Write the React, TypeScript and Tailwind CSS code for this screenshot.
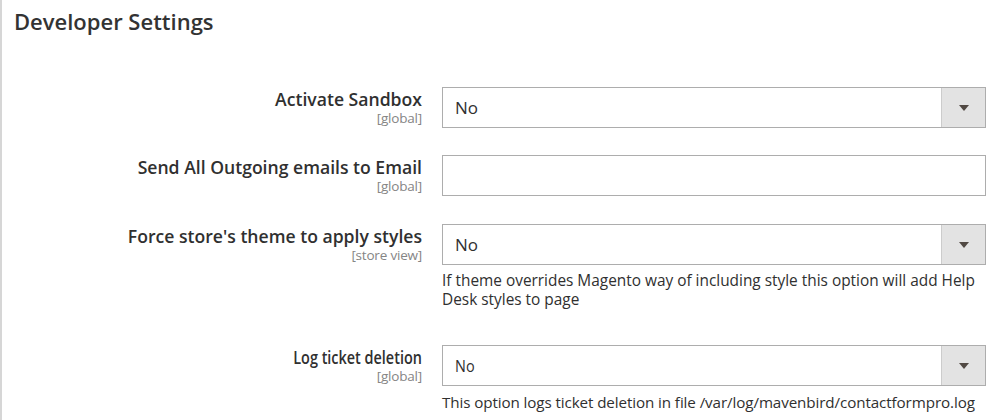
import React from "react";

const font = { fontFamily: '"Open Sans", "Liberation Sans", sans-serif' };

function Arrow() {
  return (
    <div className="w-[44px] h-full bg-[#e3e3e3] border-l border-[#cccccc] flex items-center justify-center">
      <svg width="10" height="6" viewBox="0 0 10 6">
        <polygon points="0,0 10,0 5,6" fill="#514943" />
      </svg>
    </div>
  );
}

function Select({ value, condensed }: { value: string; condensed?: boolean }) {
  return (
    <div className="h-[41px] w-[544px] border border-[#adadad] bg-white flex items-stretch">
      <div className="flex-1 flex items-center pl-[12px] text-[17px] text-[#303030]">
        <span className={condensed ? "inline-block scale-x-[0.85] origin-left" : ""}>{value}</span>
      </div>
      <Arrow />
    </div>
  );
}

function Row({
  label,
  scope,
  children,
  className,
  condensed,
}: {
  label: string;
  scope: string;
  children: React.ReactNode;
  className?: string;
  condensed?: boolean;
}) {
  return (
    <div className={"flex " + (className || "")}>
      <div className="w-[421px] shrink-0 pr-[1px] flex flex-col items-end pt-[1px]">
        <div
          className={
            "text-[17.6px] leading-[22px] font-semibold text-[#303030] whitespace-nowrap" +
            (condensed ? " scale-x-[0.82] origin-right" : "")
          }
        >
          {label}
        </div>
        <div className="text-[13.5px] leading-[15px] text-[#858585] mt-[1px] tracking-[-0.2px]">{scope}</div>
      </div>
      <div className="ml-[19px] shrink-0 flex flex-col">{children}</div>
    </div>
  );
}

export default function App() {
  return (
    <div style={font} className="w-[995px] h-[420px] bg-white border-l-2 border-[#d6d6d6] overflow-hidden">
      <div className="pl-[12px] pt-[7px] text-[22px] leading-[29px] font-semibold text-[#333333]">
        Developer Settings
      </div>
      <div className="mt-[51px] flex flex-col">
        <Row label="Activate Sandbox" scope="[global]">
          <Select value="No" />
        </Row>
        <Row label="Send All Outgoing emails to Email" scope="[global]" className="mt-[27px]">
          <div className="h-[41px] w-[544px] border border-[#adadad] bg-white" />
        </Row>
        <Row label="Force store's theme to apply styles" scope="[store view]" className="mt-[28px]">
          <Select value="No" />
          <div className="mt-[6px] w-[544px] text-[15.4px] leading-[19px] text-[#303030]">
            If theme overrides Magento way of including style this option will add Help Desk styles to page
          </div>
        </Row>
        <Row label="Log ticket deletion" scope="[global]" className="mt-[36px]" condensed>
          <Select value="No" condensed />
          <div className="mt-[7px] w-[544px] text-[15.2px] leading-[19px] text-[#303030] whitespace-nowrap tracking-[-0.1px]">
            This option logs ticket deletion in file /var/log/mavenbird/contactformpro.log
          </div>
        </Row>
      </div>
    </div>
  );
}
